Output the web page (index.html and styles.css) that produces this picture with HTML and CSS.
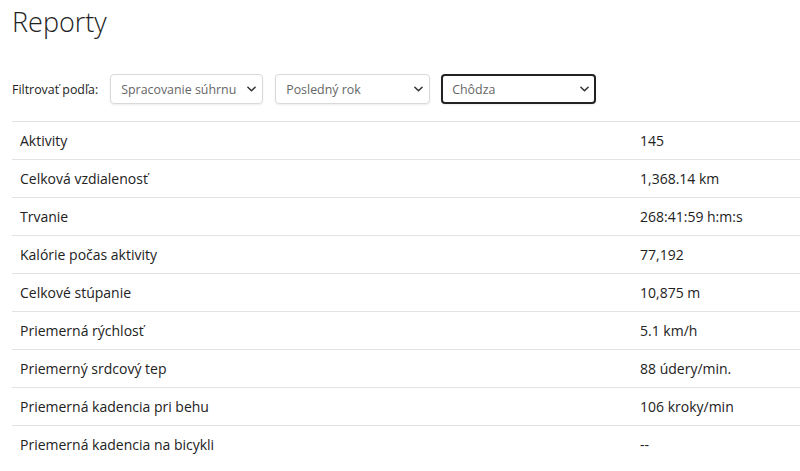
FILE: index.html
```
<!DOCTYPE html>
<html lang="sk">
<head>
<meta charset="utf-8">
<title>Reporty</title>
<link rel="stylesheet" href="styles.css">
</head>
<body>
<div class="page">
  <h1 class="title">Reporty</h1>
  <div class="filters">
    <span class="filter-label">Filtrovať podľa:</span>
    <div class="select s1"><span>Spracovanie súhrnu</span><svg class="chev" viewBox="0 0 10 6" width="9" height="6"><path d="M1 1l4 4 4-4" fill="none" stroke="#333" stroke-width="1.7" stroke-linecap="round" stroke-linejoin="round"/></svg></div>
    <div class="select s2"><span>Posledný rok</span><svg class="chev" viewBox="0 0 10 6" width="9" height="6"><path d="M1 1l4 4 4-4" fill="none" stroke="#333" stroke-width="1.7" stroke-linecap="round" stroke-linejoin="round"/></svg></div>
    <div class="select s3 active"><span>Chôdza</span><svg class="chev" viewBox="0 0 10 6" width="9" height="6"><path d="M1 1l4 4 4-4" fill="none" stroke="#333" stroke-width="1.7" stroke-linecap="round" stroke-linejoin="round"/></svg></div>
  </div>
  <table class="stats">
    <tr><td class="name">Aktivity</td><td class="val">145</td></tr>
    <tr><td class="name">Celková vzdialenosť</td><td class="val">1,368.14 km</td></tr>
    <tr><td class="name">Trvanie</td><td class="val">268:41:59 h:m:s</td></tr>
    <tr><td class="name">Kalórie počas aktivity</td><td class="val">77,192</td></tr>
    <tr><td class="name">Celkové stúpanie</td><td class="val">10,875 m</td></tr>
    <tr><td class="name">Priemerná rýchlosť</td><td class="val">5.1 km/h</td></tr>
    <tr><td class="name">Priemerný srdcový tep</td><td class="val">88 údery/min.</td></tr>
    <tr><td class="name">Priemerná kadencia pri behu</td><td class="val">106 kroky/min</td></tr>
    <tr><td class="name">Priemerná kadencia na bicykli</td><td class="val">--</td></tr>
  </table>
</div>
</body>
</html>
```
FILE: styles.css
```
html, body {
  margin: 0;
  padding: 0;
  background: #fff;
}
body {
  font-family: "Open Sans", "Liberation Sans", sans-serif;
  color: #222;
  overflow: hidden;
}
.page {
  padding: 0 0 0 12px;
}
.title {
  margin: 0;
  padding-top: 3px;
  font-size: 27px;
  font-weight: 300;
  line-height: 38px;
  color: #222;
}
.filters {
  display: flex;
  align-items: center;
  margin-top: 33px;
  height: 30px;
}
.filter-label {
  font-size: 12.4px;
  color: #222;
  margin-right: 12px;
}
.select {
  box-sizing: border-box;
  height: 30px;
  display: flex;
  align-items: center;
  justify-content: space-between;
  padding: 0 6px 0 10px;
  border: 1px solid #d9d9d9;
  border-radius: 4px;
  box-shadow: 0 1px 2px rgba(0,0,0,0.08);
  font-size: 12.4px;
  color: #666;
  margin-right: 12px;
  white-space: nowrap;
}
.s1 { width: 153px; }
.s2 { width: 155px; margin-right: 11px; }
.s3 { width: 155px; }
.select.active {
  border: 2px solid #222;
  padding-left: 9px;
  padding-right: 5px;
}
.chev { display: block; }
.stats {
  margin-top: 17px;
  width: 788px;
  border-collapse: collapse;
  font-size: 14px;
}
.stats td {
  border-top: 1px solid #e3e3e3;
  height: 37px;
  padding: 0 8px;
  vertical-align: middle;
}
.stats .name { width: 604px; }
```
